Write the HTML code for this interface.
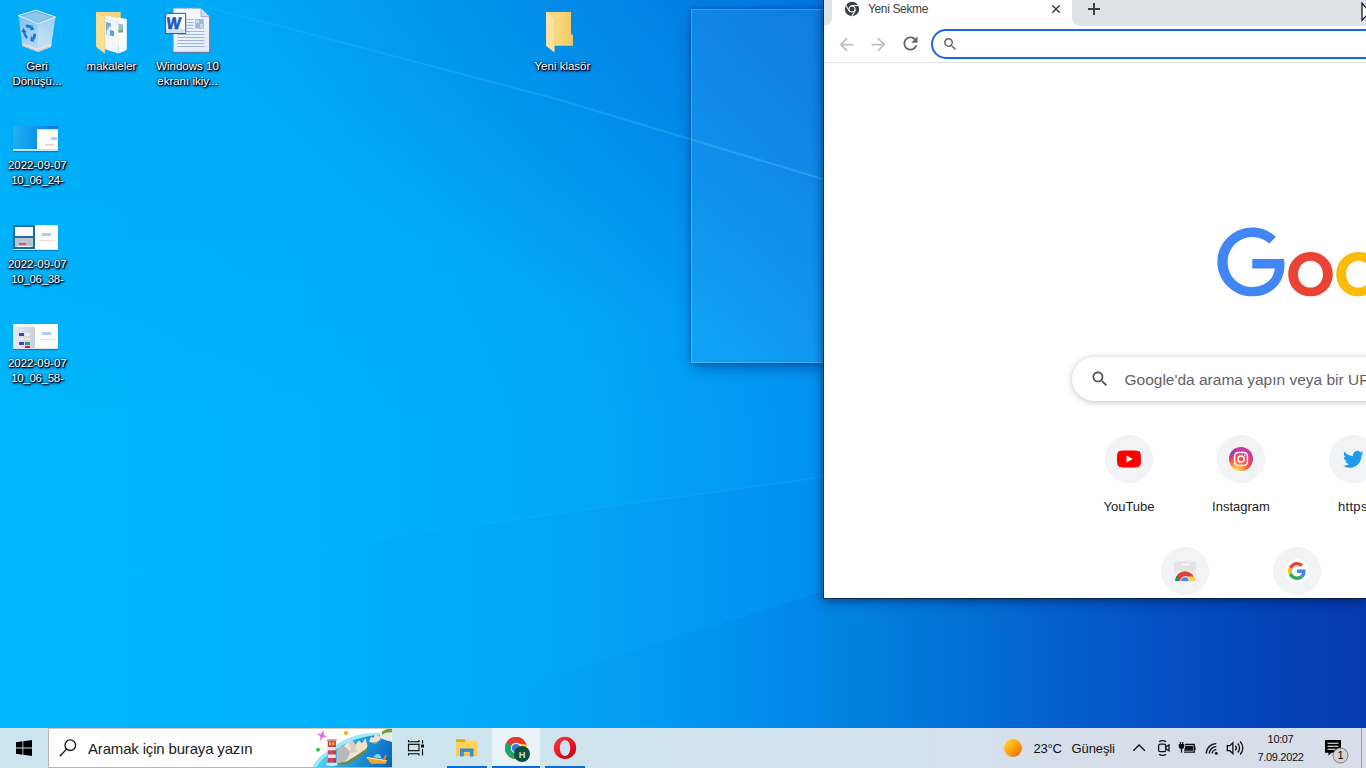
<!DOCTYPE html>
<html lang="tr">
<head>
<meta charset="utf-8">
<title>Masaüstü</title>
<style>
*{box-sizing:border-box;margin:0;padding:0}
html,body{width:1366px;height:768px;overflow:hidden;background:#0090e8}
body{position:relative;font-family:"Liberation Sans",sans-serif;color:#000}
#wall{position:absolute;left:0;top:0;width:1366px;height:768px;display:block}
.abs{position:absolute}
/* desktop icons */
.dlabel{position:absolute;width:90px;text-align:center;color:#fff;font-size:11.500px;line-height:15px;
  text-shadow:1px 1px 1px rgba(0,0,20,1),1px 1px 2px rgba(0,0,20,.95),0 1px 3px rgba(0,0,20,.8),0 0 2px rgba(0,0,20,.6);white-space:nowrap}
/* snap preview */
#snap{position:absolute;left:691px;top:9px;width:136px;height:354px;background:rgba(255,255,255,.06);
  border:1px solid rgba(255,255,255,.22);box-shadow:0 6px 14px -3px rgba(0,10,70,.48),0 0 4px rgba(0,10,70,.32)}
/* chrome window */
#chrome{position:absolute;left:824px;top:0;width:542px;height:598px;background:#fff;overflow:hidden;
  box-shadow:0 0 0 1px rgba(8,30,62,.8),0 3px 12px rgba(0,0,40,.4),-2px 0 8px rgba(0,0,40,.22)}
#tabstrip{position:absolute;left:0;top:0;width:542px;height:26px;background:#dee1e6}
#tab{position:absolute;left:8px;top:-8px;width:240px;height:34px;background:#fff;border-radius:8px 8px 0 0}
#tab:before,#tab:after{content:"";position:absolute;bottom:0;width:8px;height:8px}
#tab:before{left:-8px;background:radial-gradient(circle at 0 0,rgba(255,255,255,0) 7.5px,#fff 8px)}
#tab:after{right:-8px;background:radial-gradient(circle at 100% 0,rgba(255,255,255,0) 7.5px,#fff 8px)}
#tabtitle{position:absolute;left:44px;top:1px;font-size:12px;line-height:16px;color:#3c4043;white-space:nowrap;letter-spacing:-.36px}
#toolbar{position:absolute;left:0;top:26px;width:542px;height:36px;background:#fff}
#tbline{position:absolute;left:0;top:62px;width:542px;height:1px;background:#dcdde0}
#omni{position:absolute;left:107px;top:29px;width:600px;height:30px;border:2px solid #1a68e0;border-radius:15px;background:#fff}
/* ntp */
#sbox{position:absolute;left:248px;top:357px;width:561px;height:44px;border-radius:22px;background:#fff;
  box-shadow:0 1px 6px 0 rgba(32,33,36,.28)}
#sbox span{position:absolute;left:52.500px;top:13px;font-size:15.500px;line-height:20px;color:#5f6368;white-space:nowrap}
.tile{position:absolute;width:48px;height:48px;border-radius:50%;background:#f1f3f4}
.tlabel{position:absolute;width:112px;text-align:center;font-size:13px;line-height:16px;color:#202124;white-space:nowrap}
/* taskbar */
#taskbar{position:absolute;left:0;top:728px;width:1366px;height:40px;
  background:linear-gradient(90deg,#cbe4ef 0,#cde4ee 500px,#d2e3ee 800px,#d6deea 1100px,#d7deea 1366px)}
#tsearch{position:absolute;left:48px;top:0;width:344px;height:40px;background:#fff;border:1px solid #b9b4b4;border-top-color:#d9c9c4;border-right-width:0;overflow:hidden}
#tsearch span{position:absolute;left:39px;top:10px;font-size:15px;line-height:19px;color:#1b1b1b;white-space:nowrap;letter-spacing:-.17px}
.tbtn{position:absolute;top:0;height:40px;width:48px}
.ind{position:absolute;top:38px;height:2px;background:#0a6cd6}
.tray{position:absolute;font-size:12px;line-height:15px;color:#111;white-space:nowrap}
</style>
</head>
<body>
<svg id="wall" width="1366" height="768" viewBox="0 0 1366 768">
  <defs>
    <linearGradient id="wg" x1="0" y1="0" x2="826" y2="0" gradientUnits="userSpaceOnUse">
      <stop offset="0" stop-color="#00b6fc"/>
      <stop offset="0.36" stop-color="#00b3fb"/>
      <stop offset="0.55" stop-color="#00aefa"/>
      <stop offset="0.73" stop-color="#02a6f8"/>
      <stop offset="0.87" stop-color="#019cf5"/>
      <stop offset="1" stop-color="#0292f2"/>
    </linearGradient>
    <linearGradient id="wr" x1="824" y1="0" x2="1366" y2="0" gradientUnits="userSpaceOnUse">
      <stop offset="0" stop-color="#0085e1"/>
      <stop offset="0.10" stop-color="#007ede"/>
      <stop offset="0.325" stop-color="#036ad2"/>
      <stop offset="0.62" stop-color="#0450c4"/>
      <stop offset="0.88" stop-color="#0440b6"/>
      <stop offset="1" stop-color="#043cb0"/>
    </linearGradient>
    <radialGradient id="wtop" cx="0" cy="0" r="1" gradientUnits="userSpaceOnUse" gradientTransform="translate(900,-110) scale(720,470)">
      <stop offset="0" stop-color="#0050c8" stop-opacity=".5"/>
      <stop offset="0.42" stop-color="#0050c8" stop-opacity=".32"/>
      <stop offset="1" stop-color="#0050c8" stop-opacity="0"/>
    </radialGradient>
    <linearGradient id="wleft" x1="0" y1="0" x2="0" y2="768" gradientUnits="userSpaceOnUse">
      <stop offset="0" stop-color="#0050c8" stop-opacity=".10"/>
      <stop offset="0.55" stop-color="#0050c8" stop-opacity="0"/>
    </linearGradient>
    <linearGradient id="wbot" x1="389" y1="0" x2="826" y2="0" gradientUnits="userSpaceOnUse">
      <stop offset="0" stop-color="#0038b0" stop-opacity="0"/>
      <stop offset="0.7" stop-color="#0038b0" stop-opacity=".08"/>
      <stop offset="1" stop-color="#0038b0" stop-opacity=".16"/>
    </linearGradient>
    <linearGradient id="wmid" x1="300" y1="0" x2="826" y2="0" gradientUnits="userSpaceOnUse">
      <stop offset="0" stop-color="#0050c8" stop-opacity="0"/>
      <stop offset="1" stop-color="#0050c8" stop-opacity=".07"/>
    </linearGradient>
    <linearGradient id="beam" x1="0" y1="0" x2="900" y2="0" gradientUnits="userSpaceOnUse">
      <stop offset="0" stop-color="#40c0ff" stop-opacity=".08"/>
      <stop offset="1" stop-color="#48b8ff" stop-opacity=".42"/>
    </linearGradient>
  </defs>
  <rect width="826" height="768" fill="url(#wg)"/>
  <rect width="826" height="768" fill="url(#wleft)"/>
  <rect width="826" height="768" fill="url(#wtop)"/>
  <polygon points="0,590 824,477 826,477 826,592 389,728 0,728" fill="url(#wmid)"/>
  <polygon points="389,728 826,591 826,768 389,768" fill="url(#wbot)"/>
  <rect x="824" y="0" width="542" height="768" fill="url(#wr)"/>
  <polyline points="180,0 380,52.4 560,100 826,180" fill="none" stroke="url(#beam)" stroke-width="2"/>
  <line x1="0" y1="590" x2="824" y2="477" stroke="url(#beam)" stroke-width="1.6" opacity=".45"/>
</svg>


<!-- desktop icons -->
<svg class="abs" style="left:14px;top:6px" width="46" height="50" viewBox="14 6 46 50">
  <defs>
    <linearGradient id="rbL" x1="18" y1="16" x2="38" y2="52" gradientUnits="userSpaceOnUse"><stop offset="0" stop-color="#7fc0e9"/><stop offset=".7" stop-color="#a9d6f1"/><stop offset="1" stop-color="#b5dcf3"/></linearGradient>
    <linearGradient id="rbR" x1="55" y1="17" x2="40" y2="52" gradientUnits="userSpaceOnUse"><stop offset="0" stop-color="#9ccfee"/><stop offset=".7" stop-color="#bfe0f4"/><stop offset="1" stop-color="#c9e5f6"/></linearGradient>
  </defs>
  <path d="M18.500 15.500L36 10.200 55.500 17 38 23.500z" fill="#66b2e2"/>
  <path d="M21 16L36 12 52.500 17.300 38 22z" fill="#8cc6ea"/>
  <path d="M18.500 15.500L38 23.500V52L22.500 46z" fill="url(#rbL)"/>
  <path d="M38 23.500L55.500 17 51 47 38 52z" fill="url(#rbR)"/>
  <path d="M22 43.300L38 48.600 51.600 43.800 51 47 38 52 22.500 46z" fill="#e1e4e7"/><path d="M22.300 45.200L38 50.800 51.200 46 51 47 38 52 22.500 46z" fill="#b9bec4"/><path d="M18.500 15.500L36 10.200 55.500 17 38 23.500z" fill="none" stroke="#e4f3fb" stroke-width="1"/>
  <g transform="translate(29.300 32.800) skewY(20) scale(.95 1.150)"><path d="M-3.45 -4.41A5.6 5.6 0 0 1 1.73 -5.33" fill="none" stroke="#1a73d6" stroke-width="2.7"/><path d="M5.15 -4.21L2.63 -8.08L0.83 -2.57z" fill="#1a73d6"/><path d="M5.55 -0.78A5.6 5.6 0 0 1 3.75 4.16" fill="none" stroke="#1a73d6" stroke-width="2.7"/><path d="M1.07 6.57L5.69 6.32L1.81 2.01z" fill="#1a73d6"/><path d="M-2.10 5.19A5.6 5.6 0 0 1 -5.48 1.16" fill="none" stroke="#1a73d6" stroke-width="2.7"/><path d="M-6.23 -2.36L-8.31 1.77L-2.64 0.56z" fill="#1a73d6"/></g>
</svg>
<div class="dlabel" style="left:-8px;top:59px">Geri<br>Dönüşü...</div>

<svg class="abs" style="left:94px;top:10px" width="36" height="46" viewBox="94 10 36 46">
  <path d="M96.200 12h24.500v34H96.200z" fill="#f5d77e"/>
  <path d="M104.500 15.500l14 2.500V53.500l-14-4.500z" fill="#f4f6fa"/>
  <path d="M104.500 19l14 3.500" stroke="#dde3ee" stroke-width=".8"/>
  <path d="M106 22l5 1.300v13l-5-1.500z" fill="#7aa7dd"/>
  <path d="M106.500 31l3.500-5 1 1.500v8.500l-4.500-1.300z" fill="#e8eef8"/>
  <path d="M110 30l4 1v5.500l-4-1.200z" fill="#5e9ed0"/>
  <path d="M118.500 17.500l8.300 1.500V50l-8.300 3.500z" fill="#fbfcfe"/>
  <path d="M118.500 23.500l4.500.7v8l-4.500.3z" fill="#8fc1e6"/>
  <path d="M118.500 30l4.500-.5v2.700l-4.500.3z" fill="#6fae6a"/>
  <path d="M96.200 12L104.800 17V53.500L96.200 47z" fill="#f7df93"/>
  <path d="M96.200 12L104.800 17V53.500" fill="none" stroke="#e9c860" stroke-width=".6"/>
</svg>
<div class="dlabel" style="left:66.500px;top:59px">makaleler</div>

<svg class="abs" style="left:164px;top:6px" width="48" height="48" viewBox="164 6 48 48">
  <defs><linearGradient id="wd" x1="173" y1="8" x2="210" y2="53" gradientUnits="userSpaceOnUse"><stop offset="0" stop-color="#fdfeff"/><stop offset="1" stop-color="#dfe8f6"/></linearGradient>
  <linearGradient id="wb" x1="166" y1="13" x2="186" y2="33" gradientUnits="userSpaceOnUse"><stop offset="0" stop-color="#eaf1fb"/><stop offset="1" stop-color="#ffffff"/></linearGradient></defs>
  <path d="M173.300 8.200h27.700l8.800 8.500V52.400h-36.500z" fill="url(#wd)" stroke="#93a4c4" stroke-width=".8"/>
  <path d="M209.800 16.700V52.400H173.300" fill="none" stroke="#5f7296" stroke-width="1"/>
  <path d="M201 8.200v8.500h8.800z" fill="#d3def0" stroke="#8497ba" stroke-width=".7"/>
  <g stroke="#9db6dc" stroke-width="1.100"><path d="M186.500 19.500h7M186.500 22.500h7M186.500 25.400h7M186.500 28.300h7M177.300 31.500h27M177.300 34.500h27M177.300 37.500h27M177.300 40.500h27M177.300 43.500h27M177.300 46.500h27"/></g>
  <rect x="195.200" y="19" width="8.600" height="9.700" fill="#9fb8de"/>
  <path d="M196 20h3v3h-3zM200 24h3v3.500h-3z" fill="#c9d8ef"/>
  <path d="M167.500 13.300H185.700V33.400H165.500V15.300z" fill="url(#wb)" stroke="#2450a0" stroke-width="1"/>
  <path d="M166 29c6-2.200 13-1.800 19.300 1.400v2.600H166z" fill="#cfdcf2"/>
  <text x="176" y="28.700" font-family="Liberation Sans, sans-serif" font-weight="700" font-size="16.500" text-anchor="middle" fill="#1757b8" stroke="#1757b8" stroke-width=".6" transform="translate(175.600 0) scale(.92 1) skewX(-6) translate(-175.600 0)">W</text>
</svg>
<div class="dlabel" style="left:142.500px;top:59px">Windows 10<br>ekranı ikiy...</div>

<!-- thumbnails -->
<div class="abs" style="left:13px;top:126px;width:45px;height:25px;background:linear-gradient(100deg,#22b2f4,#0f98ec 45%,#0a74da);box-shadow:0 1px 1px rgba(0,40,110,.35)">
  <div class="abs" style="left:24px;top:2.500px;width:21px;height:20.500px;background:#fff"></div>
  <div class="abs" style="left:24px;top:2.500px;width:21px;height:1.200px;background:#d9dde3"></div>
  <div class="abs" style="left:38px;top:11px;width:6px;height:2.500px;background:#b5c9f2"></div>
  <div class="abs" style="left:32px;top:18px;width:9px;height:1.500px;background:#f6d3d0"></div>
  <div class="abs" style="left:0;top:23.300px;width:45px;height:1.700px;background:#cfe2ee"></div>
</div>
<div class="dlabel" style="left:-7.700px;top:158px">2022-09-07<br><span style="letter-spacing:-.3px">10_06_24-</span></div>

<div class="abs" style="left:13px;top:225px;width:45px;height:25px;background:#fff;box-shadow:0 1px 1px rgba(0,40,110,.35)">
  <div class="abs" style="left:0;top:0;width:22px;height:25px;background:#1d6f96"></div>
  <div class="abs" style="left:2px;top:2px;width:18px;height:8.500px;background:#f6f7f8"></div>
  <div class="abs" style="left:2px;top:13px;width:18px;height:9px;background:#b9c6d2"></div>
  <div class="abs" style="left:6px;top:17.500px;width:7px;height:2.500px;background:#e8506a"></div>
  <div class="abs" style="left:4px;top:20.500px;width:14px;height:1.500px;background:#eef1f4"></div>
  <div class="abs" style="left:29px;top:8px;width:9px;height:2.500px;background:#b5c9f2"></div>
  <div class="abs" style="left:26px;top:14.500px;width:16px;height:1.500px;background:#f6d9d6"></div>
  <div class="abs" style="left:0;top:23.500px;width:45px;height:1.500px;background:#d6e4ee"></div>
</div>
<div class="dlabel" style="left:-7.700px;top:257px">2022-09-07<br><span style="letter-spacing:-.3px">10_06_38-</span></div>

<div class="abs" style="left:13px;top:324px;width:45px;height:25px;background:#fff;box-shadow:0 1px 1px rgba(0,40,110,.35)">
  <div class="abs" style="left:0;top:0;width:22px;height:25px;background:linear-gradient(90deg,#e6e9f0,#c9cfdb)"></div>
  <div class="abs" style="left:0;top:0;width:22px;height:3px;background:#f1f3f6"></div>
  <div class="abs" style="left:6px;top:8.500px;width:5px;height:3.500px;background:#2f4fa8"></div>
  <div class="abs" style="left:12px;top:8.500px;width:5px;height:3.500px;background:#f4f1ea"></div>
  <div class="abs" style="left:6px;top:13.500px;width:5px;height:2.500px;background:#f6e3d6"></div>
  <div class="abs" style="left:12px;top:13.500px;width:5px;height:2.500px;background:#f6e3d6"></div>
  <div class="abs" style="left:6px;top:17.500px;width:5px;height:3px;background:#5a3fa0"></div>
  <div class="abs" style="left:12px;top:17.500px;width:5px;height:3px;background:#2f8f88"></div>
  <div class="abs" style="left:11.500px;top:22px;width:5px;height:2px;background:#d6202a"></div>
  <div class="abs" style="left:29px;top:8px;width:9px;height:2.500px;background:#b5c9f2"></div>
  <div class="abs" style="left:26px;top:14.500px;width:16px;height:1.500px;background:#f6d9d6"></div>
  <div class="abs" style="left:0;top:23.500px;width:45px;height:1.500px;background:#e3e8ee"></div>
</div>
<div class="dlabel" style="left:-7.700px;top:356px">2022-09-07<br><span style="letter-spacing:-.3px">10_06_58-</span></div>

<svg class="abs" style="left:544px;top:10px" width="32" height="44" viewBox="544 10 32 44">
  <defs><linearGradient id="fb" x1="546" y1="0" x2="573" y2="0" gradientUnits="userSpaceOnUse"><stop offset="0" stop-color="#f8dc8c"/><stop offset=".55" stop-color="#f7d678"/><stop offset="1" stop-color="#eec660"/></linearGradient></defs>
  <path d="M546.200 12h24.800v21.500l2 2V45.800H546.200z" fill="url(#fb)"/>
  <path d="M546.200 12L555.200 19.500 554.200 52.300 546.200 46z" fill="#fae3a0"/>
  <path d="M555.200 19.500L554.200 52.300" stroke="#e6c566" stroke-width=".6"/>
</svg>
<div class="dlabel" style="left:517.400px;top:59px">Yeni klasör</div>

<div id="snap"></div>

<div id="chrome">
  <div id="tabstrip"><div id="tab"></div></div>
  <svg class="abs" style="left:20px;top:1px" width="16" height="16" viewBox="-8 -8 16 16">
    <circle r="7.2" fill="#3c4043"/>
    <g stroke="#fff" stroke-width="1.05" fill="none" stroke-linecap="butt">
      <path d="M-1.2 -3.45H6.6"/>
      <path d="M-1.2 -3.45H6.6" transform="rotate(120)"/>
      <path d="M-1.2 -3.45H6.6" transform="rotate(240)"/>
      <circle r="3.05"/>
    </g>
  </svg>
  <div id="tabtitle">Yeni Sekme</div>
  <svg class="abs" style="left:226px;top:3px" width="12" height="12" viewBox="0 0 12 12"><path d="M2.300 2.300l7.400 7.400M9.700 2.300l-7.400 7.400" stroke="#3c4043" stroke-width="1.500" fill="none"/></svg>
  <svg class="abs" style="left:263px;top:2px" width="14" height="14" viewBox="0 0 14 14"><path d="M7 1v12M1 7h12" stroke="#3c4043" stroke-width="2" fill="none"/></svg>
  <div id="toolbar"></div>
  <svg class="abs" style="left:11.5px;top:33.5px" width="21" height="21" viewBox="0 0 24 24"><path fill="#bdc1c6" d="M20 11H7.83l5.59-5.59L12 4l-8 8 8 8 1.41-1.41L7.83 13H20v-2z"/></svg>
  <svg class="abs" style="left:43.5px;top:33.5px" width="21" height="21" viewBox="0 0 24 24"><path fill="#bdc1c6" d="M12 4l-1.41 1.41L16.17 11H4v2h12.17l-5.58 5.59L12 20l8-8z"/></svg>
  <svg class="abs" style="left:75.5px;top:33.3px" width="21" height="21" viewBox="0 0 24 24"><path fill="#5f6368" d="M17.65 6.35C16.2 4.9 14.21 4 12 4c-4.42 0-7.99 3.58-7.99 8s3.57 8 7.99 8c3.73 0 6.84-2.55 7.73-6h-2.08c-.82 2.33-3.04 4-5.65 4-3.31 0-6-2.69-6-6s2.69-6 6-6c1.66 0 3.14.69 4.22 1.78L13 11h7V4l-2.35 2.35z"/></svg>
  <div id="tbline"></div>
  <div id="omni"></div>
  <svg class="abs" style="left:118px;top:36px" width="16.5" height="16.5" viewBox="0 0 24 24"><path fill="#5f6368" d="M15.5 14h-.79l-.28-.27C15.41 12.59 16 11.11 16 9.5 16 5.91 13.09 3 9.500 3S3 5.91 3 9.500 5.91 16 9.500 16c1.610 0 3.090-.59 4.230-1.570l.27.28v.79l5 4.990L20.490 19l-4.990-5zm-6 0C7.010 14 5 11.990 5 9.500S7.010 5 9.500 5 14 7.010 14 9.500 11.990 14 9.500 14z"/></svg>
  <!-- cursor -->
  <svg class="abs" style="left:536.600px;top:2px" width="12" height="22" viewBox="0 0 12 22"><path d="M1 1.200v17l4-4 2.600 6.200 2-1-2.600-5.700H12z" fill="#fff" stroke="#10101c" stroke-width="1.250"/></svg>

  <!-- Google logo -->
  <svg class="abs" style="left:393px;top:227px" width="272" height="92" viewBox="0 0 272 92">
    <path fill="#EA4335" d="M115.750 47.180c0 12.770-9.990 22.180-22.250 22.180s-22.250-9.410-22.250-22.180C71.250 34.320 81.240 25 93.500 25s22.250 9.320 22.250 22.180zm-9.740 0c0-7.980-5.790-13.440-12.510-13.440S80.990 39.200 80.990 47.180c0 7.900 5.790 13.440 12.510 13.440s12.510-5.550 12.510-13.440z"/>
    <path fill="#FBBC05" d="M163.750 47.180c0 12.770-9.990 22.180-22.250 22.180s-22.250-9.410-22.250-22.180c0-12.850 9.990-22.180 22.250-22.180s22.250 9.320 22.250 22.180zm-9.740 0c0-7.980-5.790-13.440-12.510-13.440s-12.510 5.460-12.510 13.440c0 7.900 5.790 13.440 12.510 13.440s12.510-5.550 12.510-13.440z"/>
    <path fill="#4285F4" d="M35.290 41.410V32H67c.31 1.640.47 3.580.47 5.680 0 7.060-1.930 15.790-8.150 22.010-6.050 6.300-13.780 9.660-24.020 9.660C16.320 69.350.36 53.890.36 34.910.36 15.930 16.320.47 35.300.47c10.500 0 17.980 4.120 23.600 9.490l-6.640 6.640c-4.030-3.780-9.490-6.720-16.970-6.720-13.860 0-24.700 11.170-24.700 25.030 0 13.860 10.840 25.030 24.700 25.030 8.990 0 14.110-3.610 17.390-6.890 2.660-2.660 4.410-6.460 5.100-11.650l-22.490.01z"/>
  </svg>

  <div id="sbox">
    <svg class="abs" style="left:18px;top:12px" width="20" height="20" viewBox="0 0 24 24"><path fill="#4d5156" d="M15.5 14h-.79l-.28-.27C15.41 12.59 16 11.11 16 9.5 16 5.91 13.09 3 9.500 3S3 5.91 3 9.500 5.91 16 9.500 16c1.610 0 3.090-.59 4.230-1.570l.27.28v.79l5 4.990L20.490 19l-4.990-5zm-6 0C7.010 14 5 11.990 5 9.500S7.010 5 9.500 5 14 7.010 14 9.500 11.990 14 9.500 14z"/></svg>
    <span>Google'da arama yapın veya bir URL yazın</span>
  </div>

  <!-- shortcuts -->
  <div class="tile" style="left:281px;top:435px"></div>
  <svg class="abs" style="left:293px;top:447px" width="24" height="24" viewBox="0 0 24 24"><path fill="#fff" d="M9 8h8v8H9z"/><path fill="#f00" d="M23.498 6.186a3.016 3.016 0 0 0-2.122-2.136C19.505 3.545 12 3.545 12 3.545s-7.505 0-9.377.505A3.017 3.017 0 0 0 .502 6.186C0 8.070 0 12 0 12s0 3.930.502 5.814a3.016 3.016 0 0 0 2.122 2.136c1.871.505 9.376.505 9.376.505s7.505 0 9.377-.505a3.015 3.015 0 0 0 2.122-2.136C24 15.930 24 12 24 12s0-3.930-.502-5.814zM9.545 15.568V8.432L15.818 12l-6.273 3.568z"/></svg>
  <div class="tlabel" style="left:249px;top:499px">YouTube</div>

  <div class="tile" style="left:393px;top:435px"></div>
  <svg class="abs" style="left:405px;top:447px" width="24" height="24" viewBox="0 0 24 24">
    <defs>
      <radialGradient id="ig1" cx="7" cy="25" r="24" gradientUnits="userSpaceOnUse">
        <stop offset="0" stop-color="#fd5"/><stop offset=".1" stop-color="#fd5"/><stop offset=".5" stop-color="#ff543e"/><stop offset="1" stop-color="#c837ab"/>
      </radialGradient>
      <radialGradient id="ig2" cx="-3" cy="2" r="12" gradientUnits="userSpaceOnUse">
        <stop offset="0" stop-color="#3771c8"/><stop offset=".13" stop-color="#3771c8"/><stop offset="1" stop-color="#60f" stop-opacity="0"/>
      </radialGradient>
    </defs>
    <circle cx="12" cy="12" r="12" fill="url(#ig1)"/><circle cx="12" cy="12" r="12" fill="url(#ig2)"/>
    <rect x="5.600" y="5.600" width="12.800" height="12.800" rx="3.600" fill="none" stroke="#fff" stroke-width="1.500"/>
    <circle cx="12" cy="12" r="3.100" fill="none" stroke="#fff" stroke-width="1.500"/>
    <circle cx="15.700" cy="8.300" r=".9" fill="#fff"/>
  </svg>
  <div class="tlabel" style="left:361px;top:499px">Instagram</div>

  <div class="tile" style="left:505px;top:435px"></div>
  <svg class="abs" style="left:518.700px;top:448.500px" width="20.600" height="20.600" viewBox="0 0 24 24"><path fill="#1d9bf0" d="M23.953 4.570a10 10 0 01-2.825.775 4.958 4.958 0 002.163-2.723c-.951.555-2.005.959-3.127 1.184a4.920 4.920 0 00-8.384 4.482C7.690 8.095 4.067 6.130 1.640 3.162a4.822 4.822 0 00-.666 2.475c0 1.710.870 3.213 2.188 4.096a4.904 4.904 0 01-2.228-.616v.06a4.923 4.923 0 003.946 4.827 4.996 4.996 0 01-2.212.085 4.936 4.936 0 004.604 3.417 9.867 9.867 0 01-6.102 2.105c-.390 0-.779-.023-1.170-.067a13.995 13.995 0 007.557 2.209c9.053 0 13.998-7.496 13.998-13.985 0-.210 0-.420-.015-.630A9.935 9.935 0 0024 4.590z"/></svg>
  <div class="tlabel" style="left:514px;top:499px;text-align:left;letter-spacing:.3px">https</div>

  <div class="tile" style="left:337px;top:547px"></div>
  <svg class="abs" style="left:350px;top:561px" width="22" height="20" viewBox="0 0 22 20">
    <rect x="0" y=".5" width="22" height="19.500" fill="#eeeeee"/>
    <rect x="0" y=".5" width="22" height="9.500" fill="#e4e4e4"/>
    <rect x="7" y="2.700" width="8" height="1.600" rx=".8" fill="#fff"/>
    <clipPath id="cwc"><circle cx="11" cy="20" r="9.800"/></clipPath>
    <g clip-path="url(#cwc)">
      <rect x="0" y="8" width="22" height="12" fill="#db4437"/>
      <path d="M5.700 20L2.700 14.800 0 13v7z" fill="#0f9d58"/>
      <path d="M11 15.400h11V20H11z" fill="#ffcd40"/>
      <circle cx="11" cy="20" r="4.700" fill="#f1f1f1"/>
      <circle cx="11" cy="20" r="3.700" fill="#4285f4"/>
    </g>
  </svg>

  <div class="tile" style="left:449px;top:547px"></div>
  <div class="abs" style="left:461px;top:559px;width:24px;height:24px;border-radius:50%;background:#fff"></div>
  <svg class="abs" style="left:464px;top:562px" width="18" height="18" viewBox="0 0 48 48">
    <path fill="#EA4335" d="M24 9.500c3.540 0 6.710 1.220 9.210 3.600l6.850-6.850C35.900 2.380 30.470 0 24 0 14.620 0 6.510 5.380 2.560 13.220l7.980 6.190C12.430 13.720 17.740 9.500 24 9.500z"/>
    <path fill="#4285F4" d="M46.980 24.550c0-1.570-.15-3.090-.38-4.550H24v9.020h12.940c-.58 2.960-2.260 5.480-4.780 7.180l7.730 6c4.510-4.180 7.090-10.360 7.090-17.650z"/>
    <path fill="#FBBC05" d="M10.530 28.590c-.48-1.450-.76-2.990-.76-4.590s.27-3.140.76-4.590l-7.980-6.190C.92 16.460 0 20.120 0 24c0 3.880.92 7.540 2.560 10.780l7.970-6.190z"/>
    <path fill="#34A853" d="M24 48c6.480 0 11.930-2.130 15.890-5.810l-7.730-6c-2.150 1.450-4.920 2.300-8.160 2.300-6.260 0-11.570-4.220-13.470-9.910l-7.980 6.190C6.510 42.620 14.620 48 24 48z"/>
  </svg>
</div>

<div id="taskbar">
  <!-- start -->
  <svg class="abs" style="left:16px;top:12px" width="16" height="16" viewBox="0 0 16 16"><path fill="#000" d="M0 2.250l6.500-.900v6.250H0zM7.300 1.250L16 0v7.600H7.300zM0 8.400h6.500v6.250L0 13.750zM7.300 8.400H16V16l-8.700-1.250z"/></svg>
  <div id="tsearch">
    <svg class="abs" style="left:8px;top:9px" width="24" height="22" viewBox="0 0 24 22"><circle cx="13.300" cy="7.200" r="5.300" fill="none" stroke="#111" stroke-width="1.300"/><path d="M9.600 11.100L2.800 18.300" stroke="#111" stroke-width="1.300" fill="none"/></svg>
    <span>Aramak için buraya yazın</span>
    <!-- search highlight illustration -->
    <svg class="abs" style="left:262px;top:0" width="81" height="38" viewBox="311 729 81 38">
      <defs>
        <linearGradient id="sea" x1="335" y1="738" x2="388" y2="768" gradientUnits="userSpaceOnUse">
          <stop offset="0" stop-color="#55cdf0"/><stop offset=".3" stop-color="#2aa6e2"/><stop offset=".7" stop-color="#1580cf"/><stop offset="1" stop-color="#0b62b6"/>
        </linearGradient>
        <linearGradient id="lh" x1="327" y1="0" x2="337" y2="0" gradientUnits="userSpaceOnUse">
          <stop offset="0" stop-color="#c43b55"/><stop offset=".5" stop-color="#d0475f"/><stop offset="1" stop-color="#9c2840"/>
        </linearGradient>
      </defs>
      <path d="M312 768C316 760 320 756 325.400 752.400C329 749.500 333 746.500 337.700 743.800C342 741 347 738.500 353 736.500C357 735 361 734.300 365.300 733.700C370 733 376 732.800 392 732.500V768z" fill="#9be9f8"/>
      <path d="M316 768C320 761 324 757.500 329 754C334 750.500 338 748 342 745.500C347 743 352 740.500 357 739C362 737.500 368 736 374 735.500C380 735 386 735 392 735V768z" fill="url(#sea)"/>
      <path d="M380 734C382 731 387 728.500 392 728.500V742C388 741 384 739.500 380 738z" fill="#f1eee8"/>
      <path d="M383 731v8M386 730v10M389 730v11" stroke="#d7d3cb" stroke-width=".8"/>
      <path d="M381.500 732.500C384 729.500 388 728.500 392 728.500V732.500C389 732 385 732.500 382.500 734.500z" fill="#5fa832"/>
      <path d="M369 742l2-5.500 2.500 1.500 2-4 2.500 2 1-1.500 1.500 5-5 3.500z" fill="#ede4d0"/>
      <path d="M369 742l4 .8 7-2-4.500 3.200z" fill="#8fb4a0"/>
      <path d="M336.500 763L338 748 344 745.500 349 741.500 352.500 740.500 355.500 745 358.500 740.500 362 743.500 365.500 738 367.500 746 366 749 358 754.500 347 761.500z" fill="#efe6d2"/>
      <path d="M338 748L344 745.500 350.500 752 346 761.500 336.500 763z" fill="#b9b9b7"/>
      <path d="M349 741.500L352.500 740.500 355.500 745 357 752 351 753z" fill="#d5cfc3"/>
      <path d="M358.500 740.500L362 743.500 363.500 750 358 754.500 356 747z" fill="#f3e2c0"/>
      <path d="M336 763.500l10.500-1.800 11.500-7 9-6.500 .8 1.800-8.800 7.800-12 6.500-11 .8z" fill="#6c8a45"/>
      <ellipse cx="331.800" cy="764.300" rx="6" ry="1.700" fill="#cdeefa"/>
      <rect x="327.800" y="741" width="8" height="21.600" fill="url(#lh)"/>
      <rect x="327.800" y="747" width="8" height="3.300" fill="#eee6e8"/>
      <rect x="327.800" y="754.500" width="8" height="3.500" fill="#eee6e8"/>
      <rect x="327.200" y="739.200" width="9.400" height="2" rx="1" fill="#c75a70"/>
      <rect x="328" y="739.600" width="7.800" height=".9" fill="#d9d4d6"/>
      <rect x="329.200" y="742.200" width="1.900" height="3" fill="#ffc222"/><rect x="332.500" y="742.200" width="1.900" height="3" fill="#ffc222"/>
      <path d="M366 757l21 3.200-1 3.600-15 0z" fill="#f6a623"/>
      <path d="M367 757.600l19.500 3" stroke="#fff3d6" stroke-width=".9"/>
      <path d="M373 757.200l3-3.200 3.500 .3 2.500 4.200z" fill="#7fd6ee"/>
      <path d="M383 759.500l2-4.800 1.500 .5-1 4.800z" fill="#f47b20"/>
      <path d="M322 731c.5 3.200 1.300 4 4.500 4.500-3.200 .5-4 1.300-4.500 4.500-.5-3.200-1.300-4-4.500-4.500 3.200-.5 4-1.300 4.500-4.500z" fill="#e36bf0" stroke="#e36bf0" stroke-width=".8" transform="rotate(18 322 735.500)"/>
      <circle cx="346" cy="733" r="2" fill="#ffa30f"/>
      <circle cx="318" cy="749.800" r="2" fill="#2fc25b"/>
    </svg>
  </div>
  <!-- task view -->
  <svg class="abs" style="left:407px;top:11px" width="18" height="17" viewBox="407 739 18 17">
    <g fill="none" stroke="#000" stroke-width="1.100">
      <path d="M408.500 740v1.700h10.500V740M408.500 755.500v-1.700h10.500v1.700"/>
      <rect x="408.500" y="744.300" width="10.500" height="6.400"/>
      <path d="M422.500 740v3.500M422.500 749v6.500"/>
    </g>
    <rect x="421" y="744.500" width="3" height="3" fill="#000"/>
  </svg>
  <!-- explorer -->
  <svg class="abs" style="left:455px;top:10px" width="24" height="20" viewBox="455 738 24 20">
    <defs><linearGradient id="fy" x1="0" y1="739" x2="0" y2="757" gradientUnits="userSpaceOnUse"><stop offset="0" stop-color="#ffd86a"/><stop offset="1" stop-color="#ffc83a"/></linearGradient></defs>
    <path d="M456 739.300h8.500l1.200 1.200H477.300v15.500H456z" fill="url(#fy)"/>
    <path d="M456 739.300h8.500l1.200 1.200-1.200 1.400H456z" fill="#e8a800"/>
    <path d="M460 756.500v-7.800h13.500v7.800h-3.700v-4.500h-6v4.500z" fill="#3a8fdb"/>
    <path d="M460 748.700h13.500v1.200H460z" fill="#2f7fca"/>
  </svg>
  <div class="ind" style="left:447px;width:40px"></div>
  <!-- chrome -->
  <div class="abs" style="left:492px;top:0;width:48px;height:40px;background:rgba(255,255,255,.55)"></div>
  <svg class="abs" style="left:504px;top:8px" width="28" height="28" viewBox="504 736 28 28">
    <circle cx="516" cy="748" r="11" fill="#e33b2e"/>
    <path d="M516 748L506.500 742.500A11 11 0 0 0 515.500 759z" fill="#1fa463"/>
    <path d="M516 748l-.5 11A11 11 0 0 0 526.500 744.500L516 743.500z" fill="#ffcd40"/>
    <path d="M506.470 742.500A11 11 0 0 1 525.530 742.500L516 742.500z" fill="#e33b2e"/>
    <path d="M516 743h10.300v0z" fill="#e33b2e"/>
    <circle cx="516" cy="748" r="5.200" fill="#fff"/>
    <circle cx="516" cy="748" r="4.100" fill="#3b78e7"/>
    <circle cx="522" cy="754" r="8" fill="#0b4f3f"/>
    <text x="522" y="757.500" font-family="Liberation Sans, sans-serif" font-weight="700" font-size="9.200" text-anchor="middle" fill="#d3e2dc">H</text>
  </svg>
  <div class="ind" style="left:492px;width:48px"></div>
  <!-- opera -->
  <svg class="abs" style="left:553px;top:8px" width="24" height="24" viewBox="553 736 24 24">
    <defs><linearGradient id="op" x1="556" y1="738" x2="574" y2="758" gradientUnits="userSpaceOnUse"><stop offset="0" stop-color="#ff3340"/><stop offset=".6" stop-color="#e3121e"/><stop offset="1" stop-color="#b10a14"/></linearGradient></defs>
    <path fill-rule="evenodd" fill="url(#op)" d="M565 736.700a11.200 11.200 0 1 0 0 22.400a11.200 11.200 0 1 0 0-22.400zM565 740c-3 0-5.200 3.600-5.200 8s2.200 8 5.200 8 5.200-3.600 5.200-8-2.200-8-5.200-8z"/>
  </svg>
  <div class="ind" style="left:545px;width:40px"></div>

  <!-- weather -->
  <div class="abs" style="left:1004px;top:11px;width:18px;height:18px;border-radius:50%;background:linear-gradient(135deg,#ffd21a 10%,#ffa313 50%,#e8650a 95%)"></div>
  <div class="tray" style="left:1033.500px;top:13px;font-size:13px;line-height:16px;letter-spacing:-.2px">23°C</div>
  <div class="tray" style="left:1071.500px;top:13px;font-size:13px;line-height:16px;letter-spacing:-.1px">Güneşli</div>
  <!-- tray icons -->
  <svg class="abs" style="left:1130px;top:10px" width="120" height="20" viewBox="1130 738 120 20">
    <g fill="none" stroke="#111" stroke-width="1.300">
      <path d="M1133.300 750.800l5.800-5.800 5.800 5.800"/>
      <rect x="1158.600" y="744.100" width="7.200" height="7.600" rx="1.800"/>
      <path d="M1165.800 747l3.200-2v5.800l-3.200-2"/>
      <path d="M1159.200 741.700c1.500-1.500 5.300-1.500 6.800 0M1159.200 754.300c1.500 1.500 5.300 1.500 6.800 0"/>
      <path d="M1185 744.500h9.300v7.600h-10.300"/>
      <path d="M1180.400 742v2.500M1182.600 742v2.500"/>
      <path d="M1179.400 744.600h4.200v1.300c0 1.500-.9 2.300-2.100 2.300s-2.100-.8-2.100-2.300z" fill="#111"/>
      <path d="M1181.500 748v4.600"/>
      <path d="M1206.300 753.600a10 10 0 0 1 10-10M1209.300 753.600a7 7 0 0 1 7-7M1212.300 753.600a4 4 0 0 1 4-4" stroke-width="1.400"/>
      <path d="M1227.300 745.700h2.600l3 -3v11l-3-3h-2.600z"/>
      <path d="M1235.300 745.600a3.500 3.500 0 0 1 0 4.800M1237.700 743.500a6.400 6.400 0 0 1 0 9M1240.100 741.500a9.200 9.200 0 0 1 0 13"/>
    </g>
    <path d="M1185.300 746h7.800v4.700h-9z" fill="#111"/>
    <rect x="1194.600" y="746.600" width="1" height="3.400" fill="#111"/>
    <circle cx="1216.300" cy="753.400" r="1.450" fill="#111"/>
  </svg>
  <div class="tray" style="left:1257px;top:4px;width:47px;text-align:center;font-size:11px;letter-spacing:-.35px">10:07</div>
  <div class="tray" style="left:1257px;top:22px;width:47px;text-align:center;font-size:11px;letter-spacing:-.3px">7.09.2022</div>
  <!-- notifications -->
  <svg class="abs" style="left:1324px;top:10px" width="28" height="26" viewBox="1324 738 28 26">
    <path d="M1325 740h16v12.800h-9.500l-3 3v-3H1325z" fill="#000"/>
    <path d="M1327.500 743.300h11M1327.500 746.300h11M1327.500 749.300h8" stroke="#fff" stroke-width="1.100"/>
    <circle cx="1340.500" cy="755.500" r="7.500" fill="#d3d3d3" stroke="#7a7a7a" stroke-width="1"/>
    <text x="1340.500" y="759.300" font-family="Liberation Sans, sans-serif" font-size="11" text-anchor="middle" fill="#000">1</text>
  </svg>
  <div class="abs" style="left:1361px;top:0;width:1px;height:40px;background:#9aa0a8"></div>
</div>
</body>
</html>
